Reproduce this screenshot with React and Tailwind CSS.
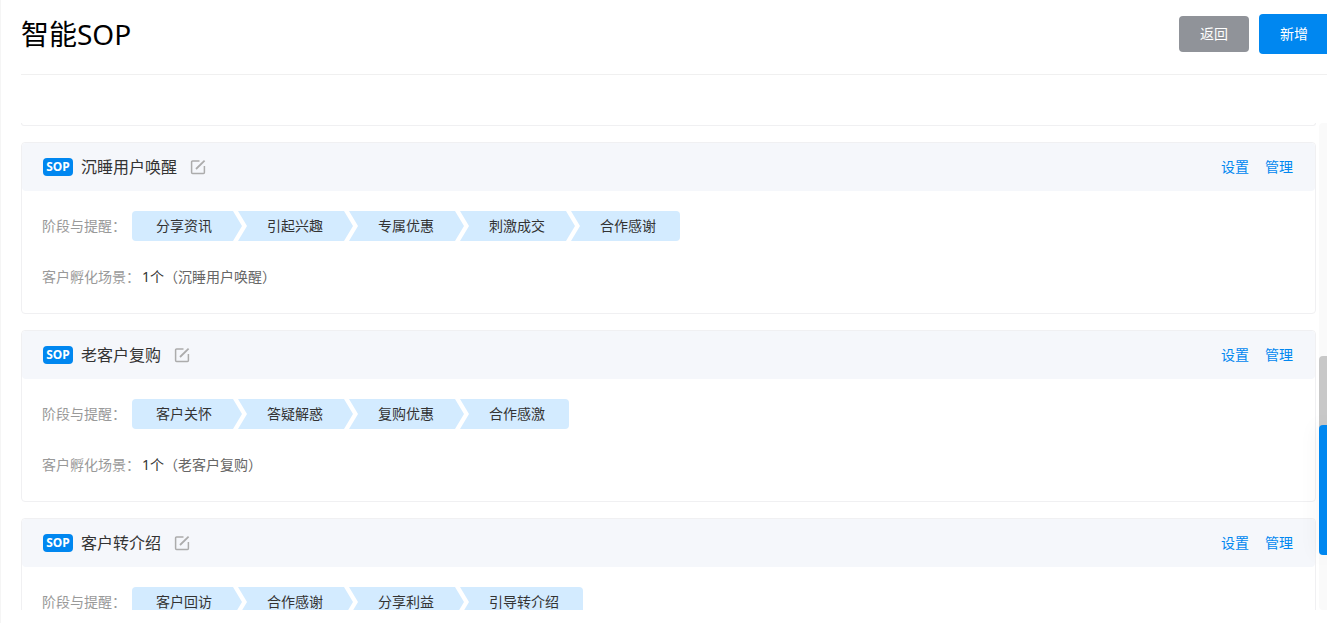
import { Fragment } from 'react';

const SOPS = [
  {
    title: '沉睡用户唤醒',
    steps: ['分享资讯', '引起兴趣', '专属优惠', '刺激成交', '合作感谢'],
    scene: '沉睡用户唤醒',
  },
  {
    title: '老客户复购',
    steps: ['客户关怀', '答疑解惑', '复购优惠', '合作感激'],
    scene: '老客户复购',
  },
  {
    title: '客户转介绍',
    steps: ['客户回访', '合作感谢', '分享利益', '引导转介绍'],
  },
];

function EditIcon() {
  return (
    <svg viewBox="0 0 16 16" className="size-4" fill="none" stroke="#acacac" strokeWidth="1.5">
      <path d="M9.5 1.9H2.6a1 1 0 0 0-1 1v10.6a1 1 0 0 0 1 1h10.8a1 1 0 0 0 1-1V7" />
      <path d="M6 10 14.6 1.6" strokeWidth="1.8" />
    </svg>
  );
}

function Steps({ items }) {
  return (
    <ol className="flex h-[30px] items-center rounded bg-[#d3ebff] text-[#333]">
      {items.map((item, i) => (
        <Fragment key={item}>
          {i > 0 && (
            <li aria-hidden="true" className="-mx-1 w-[15px]">
              <svg viewBox="0 0 15 30" className="h-[30px] w-full" fill="#fff">
                <path d="M1 0h5l9 15-9 15H1l9-15z" />
              </svg>
            </li>
          )}
          <li className="px-6">{item}</li>
        </Fragment>
      ))}
    </ol>
  );
}

function SopCard({ title, steps, scene }) {
  return (
    <section className="shrink-0 rounded border border-[#f0f0f2]">
      <header className="flex h-12 items-center rounded bg-[#f5f7fb] pr-[22px] pl-[21px]">
        <span className="flex h-[18px] w-[30px] items-center justify-center rounded bg-[#0087f0] text-xs font-bold text-white">
          SOP
        </span>
        <h2 className="ml-2 text-base text-[#333]">{title}</h2>
        <button type="button" aria-label="编辑" className="ml-[13px]">
          <EditIcon />
        </button>
        <nav className="ml-auto flex gap-4 text-[#0087f0]">
          <a href="#settings">设置</a>
          <a href="#manage">管理</a>
        </nav>
      </header>
      <div className="px-5 pt-5 pb-[26px]">
        <div className="flex items-center">
          <span className="w-[90px] text-[#999]">阶段与提醒：</span>
          <Steps items={steps} />
        </div>
        {scene && (
          <p className="mt-[26px] flex h-5 items-center text-[#666]">
            <span className="w-[100px] text-[#999]">客户孵化场景：</span>
            <span className="text-[#333]">1个</span>（{scene}）
          </p>
        )}
      </div>
    </section>
  );
}

export default function App() {
  return (
    <div className="relative flex h-screen flex-col overflow-hidden border-l border-[#f5f5f5] bg-white pb-[13px] pl-5 font-['Noto_Sans','Noto_Sans_CJK_SC',sans-serif] text-sm">
      <header className="flex h-[75px] shrink-0 items-center border-b border-[#f0f0f0] pb-1.5">
        <h1 className="text-[28px] text-black">智能SOP</h1>
        <div className="ml-auto flex items-center gap-2.5 text-white">
          <button type="button" className="h-9 rounded bg-[#909399] px-[21px]">返回</button>
          <button type="button" className="h-10 rounded-l bg-[#0087f0] pr-[19px] pl-[21px]">新增</button>
        </div>
      </header>

      <main className="mt-12 flex min-h-0 flex-1 gap-[3px]">
        <div className="flex min-w-0 flex-1 flex-col gap-4 overflow-hidden">
          {/* tail of the card scrolled out above */}
          <div className="h-[3px] shrink-0 rounded-b border-x border-b border-[#f0f0f2]" />
          {SOPS.map((sop) => (
            <SopCard key={sop.title} {...sop} />
          ))}
        </div>
        <div className="w-2 rounded-l bg-[#fafafa] pt-[233px]">
          <div className="h-28 rounded-tl bg-[#c8c8c8]" />
        </div>
      </main>

      {/* floating side tab */}
      <div className="absolute top-[425px] right-0 h-[130px] w-2 rounded-l bg-[#0087f0] shadow-[0_0_20px_rgba(0,0,0,0.08)]" />
    </div>
  );
}
